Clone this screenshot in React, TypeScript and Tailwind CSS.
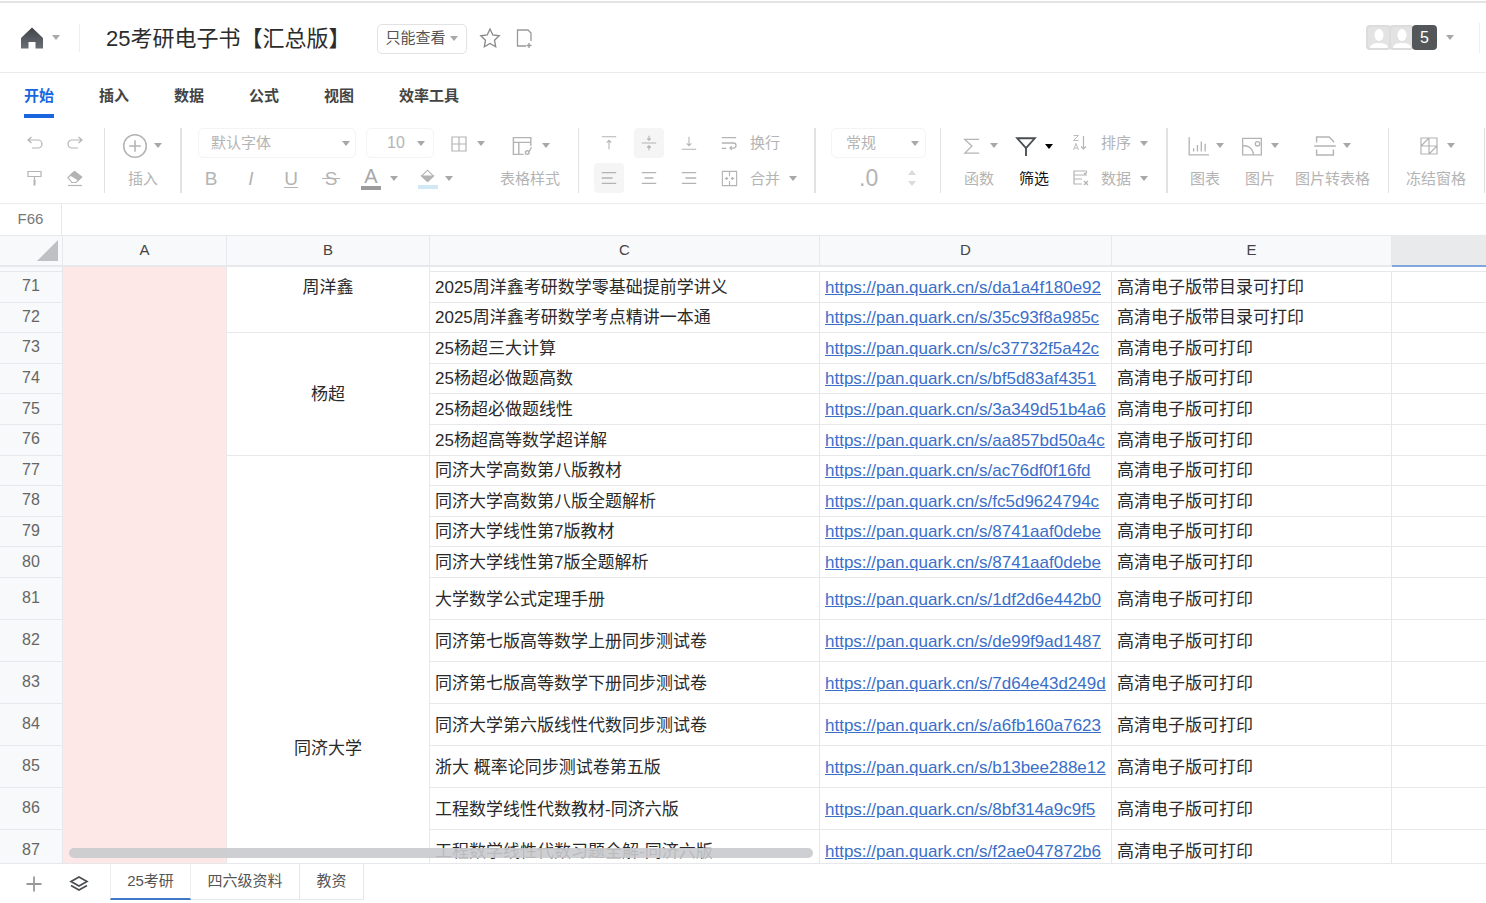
import { ReactNode } from "react";

const rows = [
  { no: 71, name: "2025周洋鑫考研数学零基础提前学讲义", url: "da1a4f180e92", note: "高清电子版带目录可打印" },
  { no: 72, name: "2025周洋鑫考研数学考点精讲一本通", url: "35c93f8a985c", note: "高清电子版带目录可打印" },
  { no: 73, name: "25杨超三大计算", url: "c37732f5a42c", note: "高清电子版可打印" },
  { no: 74, name: "25杨超必做题高数", url: "bf5d83af4351", note: "高清电子版可打印" },
  { no: 75, name: "25杨超必做题线性", url: "3a349d51b4a6", note: "高清电子版可打印" },
  { no: 76, name: "25杨超高等数学超详解", url: "aa857bd50a4c", note: "高清电子版可打印" },
  { no: 77, name: "同济大学高数第八版教材", url: "ac76df0f16fd", note: "高清电子版可打印" },
  { no: 78, name: "同济大学高数第八版全题解析", url: "fc5d9624794c", note: "高清电子版可打印" },
  { no: 79, name: "同济大学线性第7版教材", url: "8741aaf0debe", note: "高清电子版可打印" },
  { no: 80, name: "同济大学线性第7版全题解析", url: "8741aaf0debe", note: "高清电子版可打印" },
  { no: 81, name: "大学数学公式定理手册", url: "1df2d6e442b0", note: "高清电子版可打印", tall: true },
  { no: 82, name: "同济第七版高等数学上册同步测试卷", url: "de99f9ad1487", note: "高清电子版可打印", tall: true },
  { no: 83, name: "同济第七版高等数学下册同步测试卷", url: "7d64e43d249d", note: "高清电子版可打印", tall: true },
  { no: 84, name: "同济大学第六版线性代数同步测试卷", url: "a6fb160a7623", note: "高清电子版可打印", tall: true },
  { no: 85, name: "浙大 概率论同步测试卷第五版", url: "b13bee288e12", note: "高清电子版可打印", tall: true },
  { no: 86, name: "工程数学线性代数教材-同济六版", url: "8bf314a9c9f5", note: "高清电子版可打印", tall: true },
  { no: 87, name: "工程数学线性代数习题全解-同济六版", url: "f2ae047872b6", note: "高清电子版可打印", tall: true },
];

const Caret = ({ dark = false, className = "" }: { dark?: boolean; className?: string }) => (
  <span
    className={`inline-block shrink-0 w-0 h-0 border-x-[4px] border-x-transparent border-t-[5px] ${
      dark ? "border-t-black" : "border-t-[#a8a8a8]"
    } ${className}`}
  />
);

const Ico = ({ size = 20, children, className = "" }: { size?: number; children: ReactNode; className?: string }) => (
  <svg
    width={size}
    height={size}
    viewBox="0 0 20 20"
    fill="none"
    stroke="currentColor"
    strokeWidth="1.2"
    className={`shrink-0 ${className}`}
  >
    {children}
  </svg>
);

// one fixed-width slot of the toolbar, keeps its content centered
const Slot = ({ w, children, active }: { w: string; children: ReactNode; active?: boolean }) => (
  <div className={`flex items-center justify-center h-[30px] shrink-0 ${w} ${active ? "bg-[#f5f5f5] rounded-sm" : ""}`}>
    {children}
  </div>
);

const Line = ({ children, className = "" }: { children: ReactNode; className?: string }) => (
  <div className={`flex items-center h-[30px] whitespace-nowrap ${className}`}>{children}</div>
);

const Section = ({ w, line = "w-px", children }: { w: string; line?: string; children: ReactNode }) => (
  <div className={`flex shrink-0 ${w}`}>
    <div className="flex flex-col gap-[5px] flex-1 min-w-0">{children}</div>
    <div className={`h-[65px] bg-[#e2e2e2] shrink-0 ${line}`} />
  </div>
);

const Toolbar = () => (
  <div className="flex h-[86px] shrink-0 pt-[10px] border-b border-[#ececec] text-[15px] text-[#b4b4b4]">
    <Section w="w-[105px]">
      <Line className="pl-[15px]">
        <Slot w="w-[40px]">
          <Ico>
            <path d="M3 7h10a4 4 0 010 8H7M6.500 4L3 7l3.500 3" />
          </Ico>
        </Slot>
        <Slot w="w-[40px]">
          <Ico>
            <path d="M17 7H7a4 4 0 000 8h6M13.500 4L17 7l-3.500 3" />
          </Ico>
        </Slot>
      </Line>
      <Line className="pl-[15px]">
        <Slot w="w-[40px]">
          <Ico>
            <path d="M3 3.500h13v5H3zM9.500 8.500v3" />
            <rect x="8.500" y="11.500" width="2" height="6" fill="currentColor" strokeWidth="0" />
          </Ico>
        </Slot>
        <Slot w="w-[40px]">
          <Ico>
            <path d="M3 9.500l6.500-6 7 5.500-5.500 5.500H7z" />
            <path d="M5.500 7.200l4-3.700 7 5.500-3 3z" fill="currentColor" />
            <path d="M3 17.500h14" />
          </Ico>
        </Slot>
      </Line>
    </Section>

    <Section w="w-[77px]" line="w-[2px]">
      <Line className="pl-[17px]">
        <Ico size={26} className="mt-[5px]">
          <circle cx="10" cy="10" r="8.700" />
          <path d="M10 5.500v9M5.500 10h9" />
        </Ico>
        <Caret className="ml-[6px] mt-[4px]" />
      </Line>
      <Line className="pl-[23px] pt-[2px]">插入</Line>
    </Section>

    <Section w="w-[397px]">
      <Line className="pl-[16px]">
        <div className="flex items-center justify-between w-[158px] h-[30px] pl-[12px] pr-[5px] border border-[#f4f4f4] rounded-[5px]">
          默认字体
          <Caret />
        </div>
        <div className="flex items-center justify-between w-[68px] h-[30px] ml-[10px] pl-[20px] pr-[8px] border border-[#f4f4f4] rounded-[5px] text-[16px]">
          10
          <Caret />
        </div>
        <Slot w="w-[34px] ml-[8px]">
          <Ico className="mt-[2px]">
            <path d="M3 3h14v14H3zM10 3v14M3 10h14" />
          </Ico>
        </Slot>
        <Caret className="ml-[1px]" />
        <Slot w="w-[30px] ml-[23px]">
          <Ico size={24} className="mt-[5px]">
            <path d="M16.500 10V3H2v14h8.500M2 7h14.500M6.500 7v10" />
            <circle cx="13.500" cy="15.500" r="1.500" />
            <path d="M15 15l2-4" />
          </Ico>
        </Slot>
        <Caret className="ml-[4px] mt-[4px]" />
      </Line>
      <Line className="pl-[9px]">
        <Slot w="w-[40px]">
          <span className="text-[19px] leading-none">B</span>
        </Slot>
        <Slot w="w-[40px]">
          <span className="text-[19px] leading-none italic">I</span>
        </Slot>
        <Slot w="w-[40px]">
          <span className="text-[19px] leading-none underline underline-offset-2">U</span>
        </Slot>
        <Slot w="w-[40px]">
          <div className="relative text-[19px] leading-none">
            S<span className="absolute left-[-3px] right-[-3px] top-[9px] h-px bg-[#b4b4b4]" />
          </div>
        </Slot>
        <Slot w="w-[40px]">
          <div className="flex flex-col items-center">
            <span className="text-[20px] leading-[20px] text-[#a8a8a8]">A</span>
            <span className="w-[20px] h-[4px] bg-[#9b9b9b]" />
          </div>
        </Slot>
        <Caret className="ml-[-1px]" />
        <Slot w="w-[40px] ml-[10px]">
          <div className="flex flex-col items-center">
            <Ico size={18}>
              <path d="M3 10l6.500-6.500L16 10l-6.500 6z" />
              <path d="M3 10h13l-6.500 6z" fill="currentColor" />
            </Ico>
            <span className="w-[20px] h-[4px] bg-[#d1e8f5]" />
          </div>
        </Slot>
        <Caret className="ml-[-3px]" />
        <span className="ml-[47px] pt-[2px]">表格样式</span>
      </Line>
    </Section>

    <Section w="w-[237px]" line="w-[2px]">
      <Line className="pl-[15px]">
        <Slot w="w-[30px]">
          <Ico size={18}>
            <path d="M2 3h16M10 17V7M7.500 9.500L10 7l2.500 2.500" />
          </Ico>
        </Slot>
        <div className="w-[10px]" />
        <Slot w="w-[30px]" active>
          <Ico size={18}>
            <path d="M2 10h16M10 2v5M8 5l2 2 2-2M10 18v-5M8 15l2-2 2 2" />
          </Ico>
        </Slot>
        <div className="w-[10px]" />
        <Slot w="w-[30px]">
          <Ico size={18}>
            <path d="M2 17h16M10 3v10M7.500 10.500L10 13l2.500-2.500" />
          </Ico>
        </Slot>
        <Slot w="w-[50px]">
          <Ico size={18}>
            <path d="M2 4h16M2 10h13a2.800 2.800 0 010 5.600h-4M13 13.500l-2 2 2 2M2 16h5" strokeWidth="1.400" />
          </Ico>
        </Slot>
        <span className="ml-[-4px]">换行</span>
      </Line>
      <Line className="pl-[15px]">
        <Slot w="w-[30px]" active>
          <Ico size={18}>
            <path d="M2 4h16M2 10h12M2 16h16" strokeWidth="1.500" />
          </Ico>
        </Slot>
        <div className="w-[10px]" />
        <Slot w="w-[30px]">
          <Ico size={18}>
            <path d="M2 4h16M5 10h10M2 16h16" strokeWidth="1.500" />
          </Ico>
        </Slot>
        <div className="w-[10px]" />
        <Slot w="w-[30px]">
          <Ico size={18}>
            <path d="M2 4h16M6 10h12M2 16h16" strokeWidth="1.500" />
          </Ico>
        </Slot>
        <Slot w="w-[50px]">
          <Ico size={19}>
            <path d="M2.500 2.500h15v15h-15zM10 2.500v5M10 12.500v5M5 10h3M6.500 8.500L8 10l-1.500 1.500M15 10h-3M13.500 8.500L12 10l1.500 1.500" />
          </Ico>
        </Slot>
        <span className="ml-[-4px] pt-[2px]">合并</span>
        <Caret className="ml-[9px]" />
      </Line>
    </Section>

    <Section w="w-[125px]">
      <Line className="pl-[15px]">
        <div className="flex items-center justify-between w-[95px] h-[30px] pl-[14px] pr-[6px] border border-[#f4f4f4] rounded-[5px]">
          常规
          <Caret />
        </div>
      </Line>
      <Line className="pl-[43px]">
        <span className="text-[23px] leading-none">.0</span>
        <div className="flex flex-col gap-[6px] ml-[30px]">
          <span className="w-0 h-0 border-x-[4px] border-x-transparent border-b-[5px] border-b-[#dcdcdc]" />
          <span className="w-0 h-0 border-x-[4px] border-x-transparent border-t-[5px] border-t-[#dcdcdc]" />
        </div>
      </Line>
    </Section>

    <Section w="w-[227px]" line="w-[2px]">
      <Line className="pl-[20px]">
        <Ico size={22} className="mt-[6px]">
          <path d="M16.500 4H3.500L10 10l-6.500 6.500h13" />
        </Ico>
        <Caret className="ml-[7px] mt-[4px]" />
        <Ico size={22} className="ml-[17px] mt-[6px] text-[#4a4d52]">
          <path d="M2 3h16l-8 9zM10 12v7" strokeWidth="1.700" />
        </Ico>
        <Caret dark className="ml-[8px] mt-[6px]" />
        <Ico size={20} className="ml-[18px]">
          <path d="M12.500 3v13M10 13.500L12.500 16l2.500-2.500" />
          <path d="M2.500 2.500h5l-5 5h5M5 10.500L2.500 17M5 10.500L7.500 17M3.300 15h3.400" strokeWidth="0.900" />
        </Ico>
        <span className="ml-[10px]">排序</span>
        <Caret className="ml-[9px]" />
      </Line>
      <Line className="pl-[23px]">
        <span className="pt-[2px]">函数</span>
        <span className="ml-[25px] pt-[2px] text-[#111]">筛选</span>
        <Ico size={20} className="ml-[22px]">
          <path d="M16 3H3v4h13M3 7v4h8M3 11v5h8M13 5l1 1 2-2" />
          <path d="M13 13l4 4M17 13l-4 4" />
        </Ico>
        <span className="ml-[10px] pt-[2px]">数据</span>
        <Caret className="ml-[9px]" />
      </Line>
    </Section>

    <Section w="w-[221px]">
      <Line className="pl-[19px]">
        <Ico size={22} className="mt-[5px]">
          <path d="M2 2v16h18M6 15v-3M9.500 15V9M13 15V6M16.500 15V8" />
        </Ico>
        <Caret className="ml-[7px] mt-[4px]" />
        <Ico size={22} className="ml-[17px] mt-[5px]">
          <path d="M1.500 3h17v15h-17zM1.500 10c5-1 9 2 10 8M13 8a2 2 0 104 0 2 2 0 00-4 0" />
        </Ico>
        <Caret className="ml-[8px] mt-[4px]" />
        <Ico size={24} className="ml-[34px] mt-[5px]">
          <path d="M3 7V2.500h10.500L17 6v1M3 13v4.500h14V13M1 10h18" />
        </Ico>
        <Caret className="ml-[6px] mt-[4px]" />
      </Line>
      <Line className="pl-[22px] pt-[2px]">
        <span>图表</span>
        <span className="ml-[25px]">图片</span>
        <span className="ml-[20px]">图片转表格</span>
      </Line>
    </Section>

    <Section w="w-[96px]">
      <Line className="pl-[30px]">
        <Ico size={20} className="mt-[5px]">
          <path d="M2 2h16v16H2zM10 2v16M2 10h16M2 10l8-8M10 18l8-8" />
        </Ico>
        <Caret className="ml-[8px] mt-[4px]" />
      </Line>
      <Line className="pl-[17px] pt-[2px]">冻结窗格</Line>
    </Section>
  </div>
);

const Avatar = () => (
  <div className="flex items-end justify-center w-[25px] h-[25px] -mr-[2px] bg-[#e3e3e3] border-2 border-[#dcdcdc] rounded-[4px] overflow-hidden">
    <svg width="18" height="20" viewBox="0 0 18 20" fill="#fff">
      <ellipse cx="9" cy="7" rx="4.500" ry="6" />
      <path d="M0 20c0-4 5-5 9-5s9 1 9 5z" />
    </svg>
  </div>
);

const TAB_NAMES = ["插入", "数据", "公式", "视图", "效率工具"];

export default function App() {
  return (
    <div className="flex flex-col w-[1486px] h-[903px] overflow-hidden bg-white [font-family:'Liberation_Sans','Noto_Sans_CJK_SC',sans-serif]">
      <div className="h-[3px] border-b-2 border-[#e3e3e3] shrink-0" />
      {/* title bar */}
      <div className="flex items-center h-[70px] shrink-0 border-b border-[#ebebeb] pl-[20px]">
        <svg width="24" height="24" viewBox="0 0 24 24">
          <defs>
            <linearGradient id="home" x1="0" y1="0" x2="0" y2="1">
              <stop offset="0" stopColor="#3f4249" />
              <stop offset="1" stopColor="#6a6e75" />
            </linearGradient>
          </defs>
          <path d="M12 1.500L1 12v10.500h7.500V16h7v6.500H23V12z" fill="url(#home)" />
        </svg>
        <Caret className="ml-[8px]" />
        <div className="w-px h-[28px] bg-[#eeeeee] ml-[19px]" />
        <span className="ml-[26px] pt-[2px] text-[22px] text-[#2c2c2c]">25考研电子书【汇总版】</span>
        <div className="flex items-center justify-between w-[90px] ml-[27px] mt-[2px] h-[30px] pl-[7px] pr-[8px] border border-[#e2e2e2] rounded-[5px] text-[15px] text-[#555]">
          只能查看
          <Caret className="border-t-[#777]" />
        </div>
        <svg width="22" height="22" viewBox="0 0 22 22" fill="none" stroke="#888" strokeWidth="1.300" className="ml-[12px]">
          <path d="M11 2l2.800 6 6.400.8-4.700 4.400 1.200 6.500L11 16.500l-5.700 3.200 1.200-6.500L1.800 8.800 8.200 8z" />
        </svg>
        <svg width="22" height="22" viewBox="0 0 22 22" fill="none" stroke="#999" strokeWidth="1.300" className="ml-[13px]">
          <path d="M12 19H3.500V3H14l3 3v8M15 16v5M12.500 18.500h5" />
        </svg>
        <div className="flex items-center ml-auto">
          <Avatar />
          <Avatar />
          <div className="flex items-center justify-center w-[25px] h-[25px] bg-[#54575a] rounded-[4px] text-white text-[16px] relative">
            5
          </div>
          <Caret className="ml-[9px]" />
          <div className="w-px h-[30px] bg-[#eeeeee] ml-[25px] mr-[6px]" />
        </div>
      </div>

      {/* ribbon tabs */}
      <div className="flex h-[45px] shrink-0 gap-[45px] pl-[24px] text-[15px] font-semibold text-[#444]">
        <div className="flex items-center h-full pt-[1px] text-[#1a66e0] border-y-4 border-t-transparent border-b-[#1a66e0]">开始</div>
        {TAB_NAMES.map((t) => (
          <div key={t} className="flex items-center h-full pt-[1px]">
            {t}
          </div>
        ))}
      </div>

      <Toolbar />

      {/* formula bar */}
      <div className="flex items-center h-[32px] shrink-0 border-b border-[#e6e8eb] text-[15px] text-[#777]">
        <div className="flex items-center justify-center w-[62px] h-full border-r border-[#e6e8eb]">F66</div>
      </div>

      {/* column headers */}
      <div className="flex h-[31px] shrink-0 border-b-2 border-[#e6e8eb] text-[15px] text-[#444] bg-[#f8f9fa]">
        <div className="flex items-end justify-end w-[63px] pr-[4px] pb-[4px] border-r border-[#e6e8eb]">
          <div className="w-[21px] h-[21px] bg-[#bdc1c4] [clip-path:polygon(100%_0,100%_100%,0_100%)]" />
        </div>
        <div className="flex items-center justify-center w-[164px] border-r border-[#e6e8eb]">A</div>
        <div className="flex items-center justify-center w-[203px] border-r border-[#e6e8eb]">B</div>
        <div className="flex items-center justify-center w-[390px] border-r border-[#e6e8eb]">C</div>
        <div className="flex items-center justify-center w-[292px] border-r border-[#e6e8eb]">D</div>
        <div className="flex items-center justify-center w-[280px] border-r border-[#e6e8eb]">E</div>
        <div className="flex-1 bg-[#e8eaec] -mb-[2px] border-b-2 border-[#7fa6dd]" />
      </div>

      {/* sheet */}
      <div className="relative flex flex-1 min-h-0 overflow-hidden text-[17px] text-[#2a2a2a]">
        <div className="flex flex-col w-[63px] shrink-0 bg-[#f8f9fa] border-r border-[#e6e8eb] text-[16px] text-[#666]">
          <div className="h-[5px] shrink-0 border-b border-[#e6e8eb]" />
          {rows.map((r) => (
            <div
              key={r.no}
              className={`flex items-center justify-center shrink-0 pb-[1px] border-b border-[#e6e8eb] ${
                r.tall ? "h-[42px]" : "h-[30.6px]"
              }`}
            >
              {r.no}
            </div>
          ))}
        </div>
        <div className="w-[164px] shrink-0 bg-[#fee7e7] border-r border-[#e9e9e9]" />
        <div className="flex flex-col w-[203px] shrink-0 text-center border-r border-[#e6e8eb]">
          <div className="h-[66px] shrink-0 pt-[10px] leading-[22px] border-b border-[#e6e8eb]">周洋鑫</div>
          <div className="flex items-center justify-center h-[123px] shrink-0 pt-[1px] border-b border-[#e6e8eb]">杨超</div>
          <div className="flex-1 pt-[282px] leading-[22px]">同济大学</div>
        </div>
        <div className="flex flex-col flex-1 min-w-0">
          <div className="h-[5px] shrink-0 border-b border-[#e6e8eb]" />
          {rows.map((r) => {
            const pad = r.tall ? "pt-[3px]" : "pt-[1px]";
            return (
              <div
                key={r.no}
                className={`grid grid-cols-[390px_292px_280px_1fr] shrink-0 ${r.tall ? "h-[42px]" : "h-[30.6px]"}`}
              >
                <div className={`flex items-center pl-[5px] ${pad} border-r border-b border-[#e6e8eb] whitespace-nowrap`}>{r.name}</div>
                <div className={`flex items-center pl-[5px] ${pad} border-r border-b border-[#e6e8eb] whitespace-nowrap`}>
                  <a className="text-[#3a6fc9] underline">https://pan.quark.cn/s/{r.url}</a>
                </div>
                <div className={`flex items-center pl-[5px] ${pad} border-r border-b border-[#e6e8eb] whitespace-nowrap`}>{r.note}</div>
                <div className="border-b border-[#e6e8eb]" />
              </div>
            );
          })}
        </div>
        {/* horizontal scrollbar over the cells */}
        <div className="absolute left-[69px] bottom-[5px] w-[744px] h-[10px] rounded-full bg-[#c9cacd]/90" />
      </div>

      {/* sheet tabs */}
      <div className="flex h-[40px] shrink-0 border-t border-[#e6e8eb] text-[15px] text-[#555]">
        <div className="flex items-center w-[110px] shrink-0 pl-[25px] text-[#999]">
          <svg width="18" height="18" viewBox="0 0 18 18" stroke="currentColor" strokeWidth="1.800">
            <path d="M9 1.500v15M1.500 9h15" />
          </svg>
          <svg width="20" height="20" viewBox="0 0 20 20" fill="none" stroke="#4b4e55" strokeWidth="1.700" className="ml-[26px]">
            <path d="M10 3l8 4.500-8 4.500-8-4.500zM2 11.500L10 16l8-4.500" />
          </svg>
        </div>
        <div className="flex h-[36px]">
          <div className="flex items-center justify-center w-[81px] border-x border-b-2 border-x-[#eceef0] border-b-[#3f78c9]">25考研</div>
          <div className="flex items-center justify-center w-[109px] border-r border-b border-[#e6e8eb]">四六级资料</div>
          <div className="flex items-center justify-center w-[64px] border-r border-b border-[#e6e8eb]">教资</div>
        </div>
      </div>
    </div>
  );
}
